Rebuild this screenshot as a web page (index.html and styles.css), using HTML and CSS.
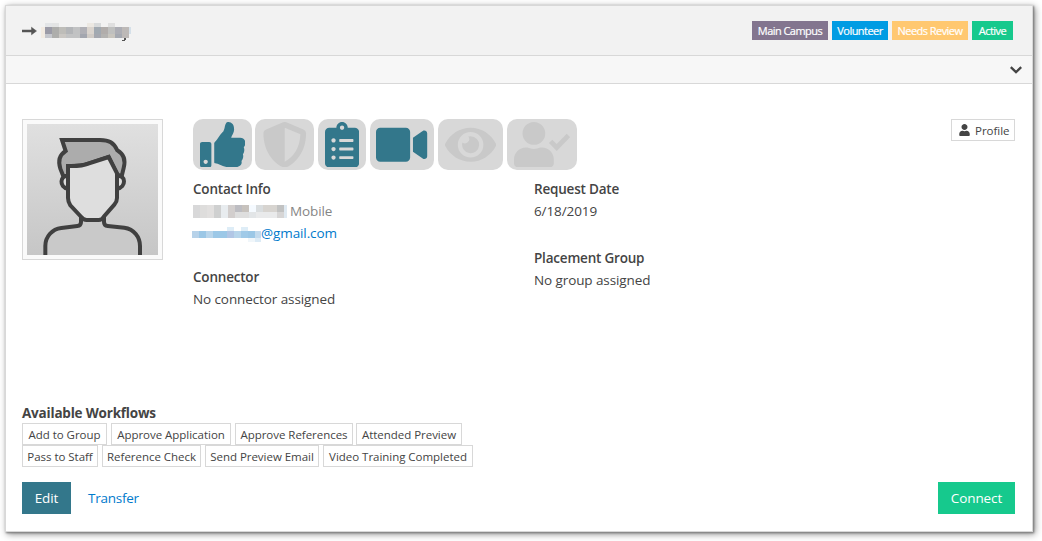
FILE: index.html
```
<!DOCTYPE html>
<html lang="en">
<head>
<meta charset="utf-8">
<title>Connection Request</title>
<link rel="stylesheet" href="styles.css">
</head>
<body>
<main class="panel">
  <header class="panel-heading">
    <h1 class="title">
      <svg class="arrow" width="15" height="10" viewBox="0 0 15 10"><path d="M0 4H9.500V1.200L14.500 5 9.500 8.800V6H0z" fill="#555" stroke="#555" stroke-width=".5"/></svg>
      <svg class="redacted-name" width="90" height="18" viewBox="0 0 90 18" shape-rendering="crispEdges">
        <path d="M0 4h4v11H0z" fill="#f2ebe2"/><path d="M4 0h7v4H4z" fill="#e3e5e7"/><path d="M11 0h7v4h-7z" fill="#e3e4e4"/><path d="M46 0h7v4h-7z" fill="#ece8e2"/><path d="M53 0h7v4h-7z" fill="#d8dadb"/><path d="M67 0h7v4h-7z" fill="#dfdfdf"/>
        <path d="M4 4h7v7H4z" fill="#9b9ba7"/><path d="M11 4h7v7h-7z" fill="#adadab"/><path d="M18 4h7v7h-7z" fill="#bebdb9"/><path d="M25 4h7v7h-7z" fill="#b3b5b8"/><path d="M32 4h7v7h-7z" fill="#c1c2c3"/><path d="M39 4h7v7h-7z" fill="#b0b0b6"/><path d="M46 4h7v7h-7z" fill="#dad4ce"/><path d="M53 4h7v7h-7z" fill="#a1a9b1"/><path d="M60 4h7v7h-7z" fill="#b1adab"/><path d="M67 4h7v7h-7z" fill="#bfc0bf"/><path d="M74 4h7v7h-7z" fill="#acadb4"/><path d="M81 4h7v11h-7z" fill="#bdb9b7"/>
        <path d="M4 11h7v4H4z" fill="#c5c7cd"/><path d="M11 11h7v4h-7z" fill="#aeaeac"/><path d="M18 11h7v4h-7z" fill="#cac7c3"/><path d="M25 11h14v4H25z" fill="#c2c3c4"/><path d="M39 11h7v4h-7z" fill="#a3a6af"/><path d="M46 11h7v4h-7z" fill="#d0cbc6"/><path d="M53 11h7v4h-7z" fill="#a5a8b0"/><path d="M60 11h7v4h-7z" fill="#b4b3b1"/><path d="M67 11h7v4h-7z" fill="#c8c5be"/><path d="M74 11h7v4h-7z" fill="#a5a9b1"/><path d="M88 4h2v7h-2z" fill="#d5e0e9"/>
        <path d="M81 17h3v1h-3zM83 15h2v2h-2z" fill="#555"/>
      </svg>
    </h1>
    <div class="labels">
      <span class="label campus">Main Campus</span>
      <span class="label volunteer">Volunteer</span>
      <span class="label review">Needs Review</span>
      <span class="label active">Active</span>
    </div>
  </header>
  <div class="panel-drawer">
    <svg width="12" height="8" viewBox="0 0 12 8"><path d="M.8 1.200L6 6.200l5.200-5" fill="none" stroke="#444" stroke-width="2.300"/></svg>
  </div>
  <div class="panel-body">
    <section class="request">
      <div class="photo">
        <svg width="131" height="131" viewBox="51 42 393 393">
          <defs><linearGradient id="bg" x1="0" y1="0" x2="0" y2="1"><stop offset="0" stop-color="#e0e0e0"/><stop offset="1" stop-color="#c6c6c6"/></linearGradient></defs>
          <path d="M51 42h393v393H51z" fill="url(#bg)"/>
          <g stroke="#404040" stroke-width="12" fill="none">
            <path d="M106 440V408C106 379 127 357 154 354L202 348Q213 347 213 336V320H282V336Q282 347 293 348L343 353C372 357 390 381 390 408V440" fill="#c9c9c9"/>
            <path d="M174 199C150 192 146 233 174 236M321 199C348 192 350 233 321 236" fill="#dedede"/>
            <path d="M160 199L151 176C144 154 148 135 167 123L156 90H270C298 90 311 98 322 121C344 134 347 152 341 174L335 199L321 193 296 141 235 161Q217 169 174 169V197z" fill="#acacac"/>
            <path d="M174 168Q217 169 235 161L296 141 321 190V264Q321 275 313 284L282 319Q276 330 266 330H230Q220 330 213 320L181 286Q174 275 174 264z" fill="#dedede"/>
          </g>
        </svg>
      </div>
      <div class="details">
        <div class="badges">
          <span class="badge thumb on"><svg viewBox="0 0 512 512"><path d="M104 224H24c-13.255 0-24 10.745-24 24v240c0 13.255 10.745 24 24 24h80c13.255 0 24-10.745 24-24V248c0-13.255-10.745-24-24-24zM64 472c-13.255 0-24-10.745-24-24s10.745-24 24-24 24 10.745 24 24-10.745 24-24 24zM384 81.452c0 42.416-25.970 66.208-33.277 94.548h101.723c33.397 0 59.397 27.746 59.553 58.098.084 17.938-7.546 37.249-19.439 49.197l-.11.11c9.836 23.337 8.237 56.037-9.308 79.469 8.681 25.895-.069 57.704-16.382 74.757 4.298 17.598 2.244 32.575-6.148 44.632C440.202 511.587 389.616 512 346.839 512l-2.845-.001c-48.287-.017-87.806-17.598-119.560-31.725-15.957-7.099-36.821-15.887-52.651-16.178-6.540-.12-11.783-5.457-11.783-11.998v-213.770c0-3.200 1.282-6.271 3.558-8.521 39.614-39.144 56.648-80.587 89.117-113.111 14.804-14.832 20.188-37.236 25.393-58.902C282.515 39.293 291.817 0 312 0c24 0 72 8 72 81.452z"/></svg></span>
          <span class="badge shield"><svg viewBox="0 0 512 512"><path d="M466.500 83.700l-192-80a48.150 48.150 0 0 0-36.900 0l-192 80C27.700 91.100 16 108.600 16 128c0 198.500 114.500 335.700 221.500 380.300 11.800 4.900 25.100 4.900 36.900 0C360.100 472.600 496 349.300 496 128c0-19.400-11.700-36.900-29.500-44.300zM256.100 446.300l-.1-381 175.900 73.300c-3.300 151.400-82.100 261.100-175.800 307.700z"/></svg></span>
          <span class="badge clipboard on"><svg viewBox="0 0 384 512"><path d="M336 64h-80c0-35.300-28.700-64-64-64s-64 28.700-64 64H48C21.500 64 0 85.500 0 112v352c0 26.500 21.500 48 48 48h288c26.500 0 48-21.500 48-48V112c0-26.500-21.500-48-48-48zM96 424c-13.300 0-24-10.700-24-24s10.700-24 24-24 24 10.700 24 24-10.700 24-24 24zm0-96c-13.300 0-24-10.700-24-24s10.700-24 24-24 24 10.700 24 24-10.700 24-24 24zm0-96c-13.300 0-24-10.700-24-24s10.700-24 24-24 24 10.700 24 24-10.700 24-24 24zm96-192c13.300 0 24 10.700 24 24s-10.700 24-24 24-24-10.700-24-24 10.700-24 24-24zm128 368c0 4.400-3.600 8-8 8H168c-4.400 0-8-3.600-8-8v-16c0-4.400 3.600-8 8-8h144c4.400 0 8 3.600 8 8v16zm0-96c0 4.400-3.600 8-8 8H168c-4.400 0-8-3.600-8-8v-16c0-4.400 3.600-8 8-8h144c4.400 0 8 3.600 8 8v16zm0-96c0 4.400-3.600 8-8 8H168c-4.400 0-8-3.600-8-8v-16c0-4.400 3.600-8 8-8h144c4.400 0 8 3.600 8 8v16z"/></svg></span>
          <span class="badge video on"><svg viewBox="0 0 576 512"><path d="M336.200 64H47.800C21.400 64 0 85.400 0 111.800v288.400C0 426.600 21.400 448 47.800 448h288.400c26.400 0 47.800-21.400 47.800-47.800V111.800c0-26.400-21.400-47.800-47.800-47.800zm189.400 37.700L416 177.300v157.400l109.600 75.500c21.200 14.600 50.400-.3 50.400-25.800V127.500c0-25.400-29.100-40.400-50.400-25.800z"/></svg></span>
          <span class="badge eye"><svg viewBox="0 0 576 512"><path d="M572.520 241.400C518.290 135.590 410.930 64 288 64S57.680 135.640 3.480 241.410a32.350 32.350 0 0 0 0 29.190C57.710 376.410 165.070 448 288 448s230.320-71.640 284.520-177.410a32.350 32.350 0 0 0 0-29.190zM288 400a144 144 0 1 1 144-144 143.930 143.930 0 0 1-144 144zm0-240a95.310 95.310 0 0 0-25.310 3.790 47.850 47.850 0 0 1-66.900 66.900A95.780 95.780 0 1 0 288 160z"/></svg></span>
          <span class="badge user"><svg viewBox="0 0 640 512"><path d="M224 256c70.700 0 128-57.300 128-128S294.700 0 224 0 96 57.300 96 128s57.300 128 128 128zm89.600 32h-16.700c-22.200 10.200-46.900 16-72.900 16s-50.600-5.800-72.900-16h-16.700C60.200 288 0 348.200 0 422.400V464c0 26.500 21.500 48 48 48h352c26.500 0 48-21.500 48-48v-41.600c0-74.200-60.200-134.400-134.400-134.400z"/><path d="M412 218l69 69 132-136" fill="none" stroke="#c9c9c9" stroke-width="54"/></svg></span>
        </div>
        <div class="columns">
          <dl class="fields contact">
            <dt>Contact Info</dt>
            <dd class="phone"><svg width="94" height="13" viewBox="0 0 94 13" shape-rendering="crispEdges"><path d="M0 0h7v13H0z" fill="#d8d8d9"/><path d="M7 0h7v13H7z" fill="#dedddc"/><path d="M14 0h7v13h-7z" fill="#e2e0df"/><path d="M21 0h7v13h-7z" fill="#cfd0d0"/><path d="M28 0h7v13h-7z" fill="#e8ecef"/><path d="M35 0h7v13h-7z" fill="#d2cecd"/><path d="M42 0h7v7h-7z" fill="#bdbdc2"/><path d="M49 0h7v7h-7z" fill="#c7c2bd"/><path d="M42 7h14v6H42z" fill="#dedede"/><path d="M56 0h7v7h-7z" fill="#f5faff"/><path d="M56 7h7v6h-7z" fill="#e2e5e7"/><path d="M63 0h7v7h-7z" fill="#d9dddf"/><path d="M70 0h14v7H70z" fill="#d7d4d0"/><path d="M63 7h21v6H63z" fill="#e9eaeb"/><path d="M84 0h7v7h-7z" fill="#c1c2c2"/><path d="M84 7h7v6h-7z" fill="#d6d5d5"/><path d="M91 0h3v13h-3z" fill="#dfe9f1"/></svg><span>Mobile</span></dd>
            <dd class="email"><svg width="69" height="15" viewBox="0 0 69 15" shape-rendering="crispEdges"><path d="M0 4h7v7H0z" fill="#b7d2e9"/><path d="M7 4h7v7H7z" fill="#9bc7e6"/><path d="M14 4h7v7h-7z" fill="#b8d5eb"/><path d="M21 4h14v7H21z" fill="#9cc8e7"/><path d="M35 4h7v7h-7z" fill="#b1c6e5"/><path d="M42 4h7v7h-7z" fill="#b7d5eb"/><path d="M49 4h7v7h-7z" fill="#a0cae8"/><path d="M56 4h7v7h-7z" fill="#9bc7e6"/><path d="M63 4h6v7h-6z" fill="#c2daed"/><path d="M35 0h7v4h-7zM49 0h7v4h-7z" fill="#deedf7"/><path d="M56 11h7v4h-7z" fill="#f0f6fa"/><path d="M63 11h6v4h-6z" fill="#dcebf6"/></svg><a>@gmail.com</a></dd>
            <dt class="second">Connector</dt>
            <dd>No connector assigned</dd>
          </dl>
          <dl class="fields placement">
            <dt>Request Date</dt>
            <dd>6/18/2019</dd>
            <dt class="second">Placement Group</dt>
            <dd>No group assigned</dd>
          </dl>
        </div>
      </div>
      <a class="btn-small profile"><svg width="11" height="12" viewBox="0 0 448 512"><path d="M224 256c70.700 0 128-57.300 128-128S294.700 0 224 0 96 57.300 96 128s57.300 128 128 128zm89.600 32h-16.700c-22.200 10.200-46.900 16-72.900 16s-50.600-5.800-72.900-16h-16.700C60.200 288 0 348.200 0 422.400V464c0 26.500 21.500 48 48 48h352c26.500 0 48-21.500 48-48v-41.600c0-74.200-60.200-134.400-134.400-134.400z" fill="#444"/></svg><span>Profile</span></a>
    </section>
    <section class="workflows">
      <h2>Available Workflows</h2>
      <div class="row"><a class="btn-small w85">Add to Group</a><a class="btn-small w120">Approve Application</a><a class="btn-small w118">Approve References</a><a class="btn-small w106">Attended Preview</a></div>
      <div class="row"><a class="btn-small w76">Pass to Staff</a><a class="btn-small w99">Reference Check</a><a class="btn-small w114">Send Preview Email</a><a class="btn-small w150">Video Training Completed</a></div>
    </section>
    <footer class="actions">
      <a class="btn edit">Edit</a>
      <a class="transfer">Transfer</a>
      <a class="btn connect">Connect</a>
    </footer>
  </div>
</main>
</body>
</html>
```
FILE: styles.css
```
* { box-sizing: border-box; }
body {
  margin: 0;
  padding: 5px 0 0 5px;
  height: 541px;
  overflow: hidden;
  background: #fff;
  color: #444;
  font: 13.5px/22px "Open Sans", "Noto Sans", sans-serif;
  letter-spacing: -0.1px;
}
h1, h2, dl, dd { margin: 0; }
svg { display: block; flex: none; }
.panel {
  width: 1028px;
  height: 527px;
  border: 1px solid #d8d8d8;
  background: #fff;
  box-shadow: 1px 1px 2px #777, 2px 2px 7px rgba(0, 0, 0, .45);
  display: flex;
  flex-direction: column;
}
.panel-heading {
  height: 50px;
  flex: none;
  border-bottom: 1px solid #d8d8d8;
  background: #f2f2f2;
  display: flex;
  justify-content: space-between;
  padding: 15px 19px 0 16px;
}
.title { display: flex; gap: 4px; }
.arrow { margin-top: 5px; }
.redacted-name { margin-top: 2px; }
.labels { display: flex; gap: 4px; }
.label {
  height: 19px;
  color: #fff;
  font-size: 11px;
  line-height: 19px;
  letter-spacing: -0.55px;
  text-align: center;
  white-space: nowrap;
  -webkit-text-stroke: .2px #fff;
}
.campus { width: 76px; background: #83758f; }
.volunteer { width: 56px; background: #009ce3; }
.review { width: 76px; background: #ffc870; }
.active { width: 41px; background: #16c98d; }
.panel-drawer {
  height: 28px;
  flex: none;
  background: #f7f7f7;
  border-bottom: 1px solid #d8d8d8;
  display: flex;
  justify-content: flex-end;
  padding: 10px 10px 0 0;
}
.panel-body {
  flex: 1;
  display: flex;
  flex-direction: column;
  padding: 35px 17px 16px 16px;
}
.request { display: flex; height: 285px; }
.photo {
  width: 141px;
  height: 141px;
  flex: none;
  border: 1px solid #d8d8d8;
  background: #fafafa;
  padding: 4px;
}
.details { margin-left: 30px; flex: 1; }
.badges { display: flex; }
.badge {
  height: 51px;
  border-radius: 10px;
  background: #d8d8d8;
  display: flex;
  align-items: center;
  justify-content: center;
  fill: #c9c9c9;
}
.badge svg { height: 45.500px; }
.on { fill: #33778b; }
.thumb { width: 59px; margin-right: 3px; }
.shield { width: 59px; margin-right: 4px; }
.clipboard { width: 48px; margin-right: 4px; }
.video { width: 64px; margin-right: 4px; }
.eye { width: 65px; margin-right: 4px; }
.user { width: 70px; }
.columns { display: flex; padding-top: 8px; }
.contact { width: 341px; }
.fields { line-height: 22px; white-space: nowrap; }
dt { font-weight: 600; letter-spacing: -0.2px; }
.contact .second { margin-top: 22px; }
.placement .second { margin-top: 25px; }
.phone, .email { display: flex; height: 22px; }
.phone svg { margin: 5px 3px 0 0; }
.email svg { margin: 5px 0 0 -1px; }
.phone { color: #858585; }
.email a, .transfer { color: #007acc; }
.btn-small {
  height: 22px;
  border: 1px solid #d8d8d8;
  background: #fff;
  font-size: 11.500px;
  line-height: 21px;
  letter-spacing: -0.03px;
  text-align: center;
  white-space: nowrap;
}
.profile { width: 64px; display: flex; padding-left: 7px; gap: 5px; }
.profile svg { margin-top: 4px; }
.workflows h2 { font-size: 13.500px; line-height: 19px; font-weight: 700; letter-spacing: -0.2px; }
.row { display: flex; gap: 4px; }
.w85 { width: 85px; } .w120 { width: 120px; } .w118 { width: 118px; } .w106 { width: 106px; margin-left: -1px; }
.w76 { width: 76px; } .w99 { width: 99px; } .w114 { width: 114px; } .w150 { width: 150px; }
.actions { display: flex; margin-top: 15px; line-height: 32px; }
.btn { height: 32px; color: #fff; text-align: center; }
.edit { width: 49px; background: #33778b; }
.transfer { margin-left: 17px; letter-spacing: -0.250px; }
.connect { width: 77px; margin-left: auto; background: #16c98d; }
```
